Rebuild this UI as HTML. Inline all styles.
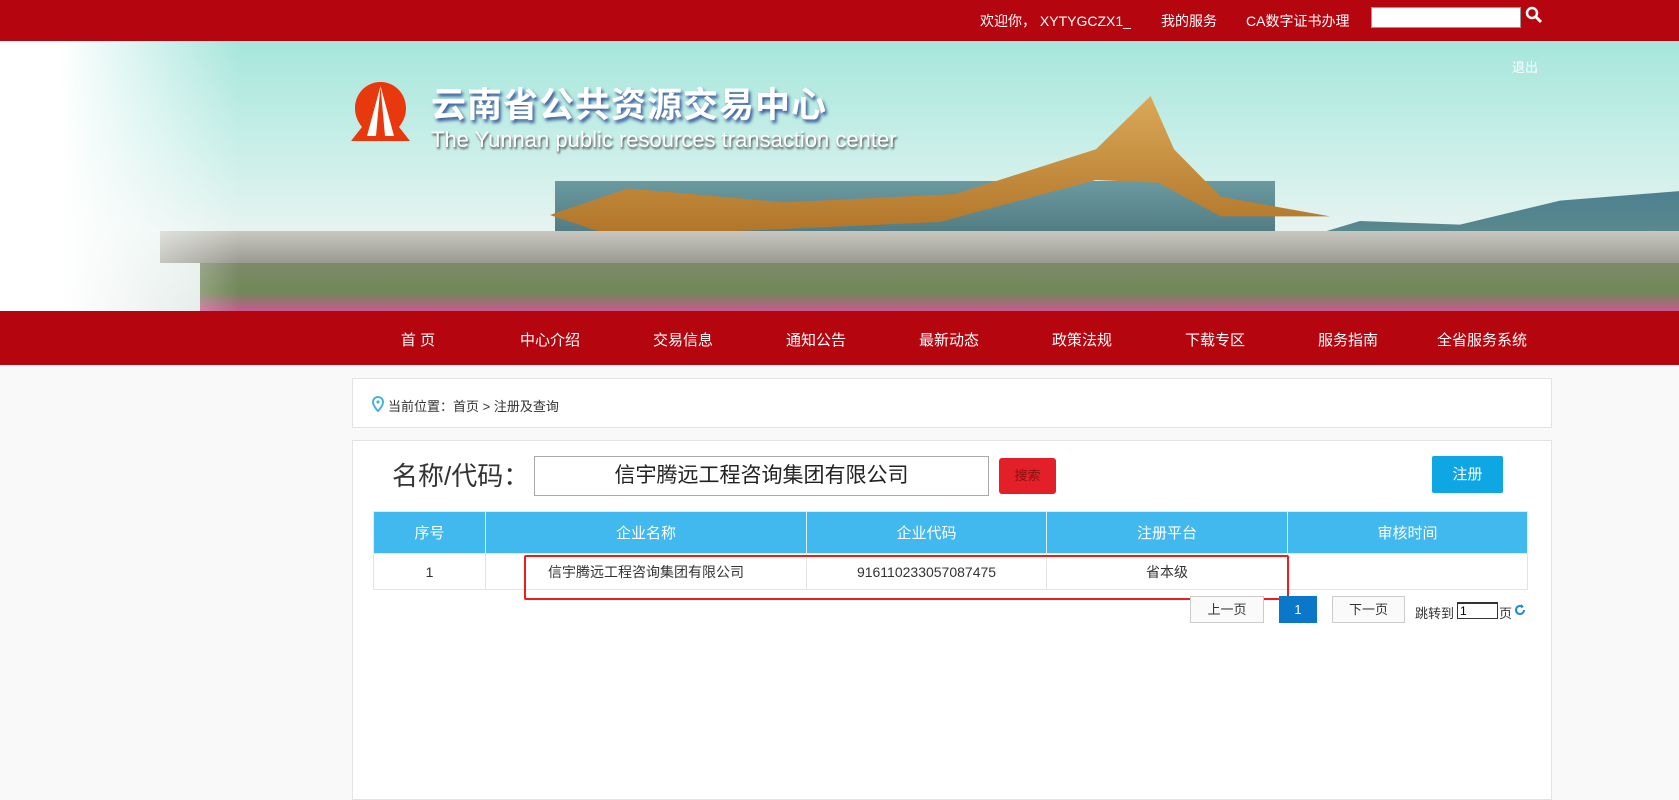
<!DOCTYPE html>
<html><head><meta charset="utf-8"><style>
*{margin:0;padding:0;box-sizing:border-box}
body{width:1679px;height:791px;overflow:hidden;background:#f9f9f9;font-family:"Liberation Sans","Noto Sans CJK SC",sans-serif;position:relative}
.top{position:absolute;left:0;top:0;width:1679px;height:41px;background:#b5050e;color:#fff;font-size:14px}
.top span{position:absolute;top:11px}
.top .inp{position:absolute;left:1371px;top:7px;width:150px;height:21px;background:#fff;border:1px solid #999}
.banner{position:absolute;left:0;top:41px;width:1679px;height:270px;overflow:hidden;background:linear-gradient(180deg,#a6e6dc 0%,#c9efe8 40%,#e6f3f0 70%,#dfe8e4 100%)}
.nav{position:absolute;left:0;top:311px;width:1679px;height:54px;background:#b5050e;color:#fff;font-size:15px}
.nav span{position:absolute;top:18px;transform:translateX(-50%);white-space:nowrap}
.panel{position:absolute;background:#fff;border:1px solid #e3e3e3}
.abs{position:absolute}
table{position:absolute;left:373px;top:511px;width:1155px;border-collapse:collapse;font-size:14px}
th{background:#41b8ee;color:#fff;font-weight:normal;height:42px;border:1px solid #d9eef8;font-size:15px}
td{height:36px;border:1px solid #e3e3e3;text-align:center;color:#333}
.pg{position:absolute;top:596px;height:27px;border:1px solid #ccc;background:#fafafa;font-size:13px;color:#333;text-align:center;line-height:25px}
</style></head><body>
<div class="top">
<span style="left:980px">欢迎你， XYTYGCZX1_</span>
<span style="left:1161px">我的服务</span>
<span style="left:1246px">CA数字证书办理</span>
<div class="inp"></div>
<svg class="abs" style="left:1525px;top:6px" width="18" height="18" viewBox="0 0 18 18"><circle cx="7" cy="7" r="5" fill="none" stroke="#fff" stroke-width="2.5"/><path d="M10.5 10.5L16 16" stroke="#fff" stroke-width="3"/></svg>
</div>
<div class="banner">
<div class="abs" style="left:1280px;top:150px;width:400px;height:120px;background:linear-gradient(180deg,#4d8090,#6f9a8a);clip-path:polygon(0 45%,20% 25%,45% 28%,70% 8%,100% 0,100% 100%,0 100%)"></div>
<div class="abs" style="left:555px;top:140px;width:720px;height:100px;background:linear-gradient(180deg,#6a9aa0,#3c5f66)"></div>
<div class="abs" style="left:550px;top:55px;width:780px;height:140px;background:linear-gradient(180deg,#dba858,#b07428);clip-path:polygon(0 85%,10% 66%,30% 76%,52% 70%,70% 38%,77% 0,80% 38%,86% 72%,100% 86%,86% 86%,78% 62%,70% 60%,50% 90%,30% 95%,8% 100%)"></div>
<div class="abs" style="left:160px;top:190px;width:1520px;height:32px;background:linear-gradient(180deg,#c8c8c0,#9a9a90)"></div>
<div class="abs" style="left:200px;top:222px;width:1480px;height:48px;background:linear-gradient(180deg,#7e8a6a,#6f8856 60%,#c65a90)"></div>
<div class="abs" style="left:0;top:0;width:240px;height:270px;background:linear-gradient(90deg,#fff 25%,rgba(255,255,255,0))"></div>
<svg class="abs" style="left:351px;top:41px" width="59" height="59" viewBox="0 0 59 59"><path d="M29.5 0C15 0 4 12 4 26c0 8 3 14 7 19L0 59h59L48 45c4-5 7-11 7-19C55 12 44 0 29.5 0z" fill="#e8380d"/><path d="M29.5 4L16 54h9zM29.5 4L43 54h-9z" fill="#fff"/></svg>
<div class="abs" style="left:431px;top:36px;font-size:35px;font-weight:bold;color:#fff;letter-spacing:1px;text-shadow:2px 3px 3px #3a5a9a">云南省公共资源交易中心</div>
<div class="abs" style="left:431px;top:86px;font-size:22px;color:#fff;text-shadow:1px 2px 2px #444">The Yunnan public resources transaction center</div>
<div class="abs" style="left:1512px;top:16px;font-size:13px;color:#fff">退出</div>
</div>
<div class="nav">
<span style="left:418px">首 页</span><span style="left:550px">中心介绍</span><span style="left:683px">交易信息</span><span style="left:816px">通知公告</span><span style="left:949px">最新动态</span><span style="left:1082px">政策法规</span><span style="left:1215px">下载专区</span><span style="left:1348px">服务指南</span><span style="left:1482px">全省服务系统</span>
</div>
<div class="panel" style="left:352px;top:378px;width:1200px;height:50px"></div>
<svg class="abs" style="left:372px;top:396px" width="12" height="16" viewBox="0 0 12 16"><path d="M6 1a5 5 0 0 0-5 5c0 4 5 9 5 9s5-5 5-9a5 5 0 0 0-5-5z" fill="none" stroke="#4ab0e0" stroke-width="2"/><circle cx="6" cy="6" r="1.6" fill="#4ab0e0"/></svg>
<div class="abs" style="left:388px;top:396px;font-size:13px;color:#333">当前位置：首页 &gt; 注册及查询</div>
<div class="panel" style="left:352px;top:440px;width:1200px;height:360px"></div>
<div class="abs" style="left:392px;top:456px;font-size:26px;color:#333">名称/代码：</div>
<div class="abs" style="left:534px;top:456px;width:455px;height:40px;border:1px solid #aaa;background:#fff;font-size:21px;color:#222;text-align:center;line-height:38px">信宇腾远工程咨询集团有限公司</div>
<div class="abs" style="left:999px;top:458px;width:57px;height:36px;background:#e3202a;border-radius:3px;color:#8a1010;font-size:13px;text-align:center;line-height:36px">搜索</div>
<div class="abs" style="left:1432px;top:456px;width:71px;height:37px;background:#0ea7e4;border-radius:2px;color:#fff;font-size:15px;text-align:center;line-height:37px">注册</div>
<table>
<tr><th style="width:112px">序号</th><th style="width:321px">企业名称</th><th style="width:240px">企业代码</th><th style="width:241px">注册平台</th><th>审核时间</th></tr>
<tr><td>1</td><td>信宇腾远工程咨询集团有限公司</td><td>916110233057087475</td><td>省本级</td><td></td></tr>
</table>
<div class="abs" style="left:524px;top:555px;width:765px;height:45px;border:2px solid #f01c1c;border-radius:2px"></div>
<div class="pg" style="left:1190px;width:74px">上一页</div>
<div class="pg" style="left:1279px;width:38px;background:#0a77c8;border-color:#0a77c8;color:#fff">1</div>
<div class="pg" style="left:1332px;width:73px">下一页</div>
<div class="abs" style="left:1415px;top:603px;font-size:13px;color:#333">跳转到</div>
<div class="abs" style="left:1457px;top:602px;width:41px;height:17px;border:1px solid #333;border-top-width:2px;background:#fff;font-size:12px;line-height:14px;padding-left:2px">1</div>
<div class="abs" style="left:1499px;top:603px;font-size:13px;color:#333">页</div>
<svg class="abs" style="left:1514px;top:604px" width="12" height="12" viewBox="0 0 12 12"><path d="M10 6a4 4 0 1 1-2-3.5" fill="none" stroke="#1a8ad8" stroke-width="2"/><path d="M7 0l3 3-3 1z" fill="#1a8ad8"/></svg>
</body></html>
